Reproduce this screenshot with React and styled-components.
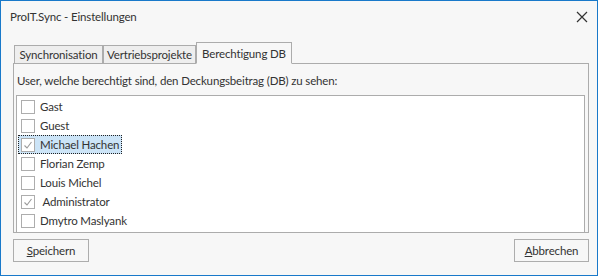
import React from "react";
import styled, { createGlobalStyle } from "styled-components";

const Global = createGlobalStyle`
  html, body { margin: 0; padding: 0; background: #f7f7f7; }
  body { font-family: Lato, "Noto Sans", sans-serif; }
`;

const Window = styled.div`
  box-sizing: border-box;
  width: 598px;
  height: 276px;
  border: 1px solid #1979ca;
  background: #f7f7f7;
  color: #333;
  font-size: 11.5px;
  letter-spacing: -0.15px;
  display: flex;
  flex-direction: column;
  overflow: hidden;
`;

const TitleBar = styled.div`
  height: 31px;
  display: flex;
  align-items: center;
  justify-content: space-between;
  padding: 0 9px 0 9px;
  flex-shrink: 0;
`;

const Title = styled.span`
  color: #333;
`;

const Close = styled.svg`
  width: 12px;
  height: 12px;
`;

const Body = styled.div`
  display: flex;
  flex-direction: column;
  padding: 11px 8px 0 12px;
`;

const TabStrip = styled.div`
  display: flex;
  align-items: flex-end;
  height: 21px;
  padding-left: 1px;
  position: relative;
  z-index: 1;
  margin-bottom: -1px;
`;

const Tab = styled.div`
  box-sizing: border-box;
  width: ${(p) => p.$w}px;
  height: ${(p) => (p.$active ? "22px" : "19px")};
  border: 1px solid #acacac;
  border-bottom: ${(p) => (p.$active ? "1px solid #f7f7f7" : "1px solid #acacac")};
  background: ${(p) => (p.$active ? "#f7f7f7" : "#eeeeee")};
  display: flex;
  align-items: center;
  justify-content: center;
  color: #333;
  white-space: nowrap;
`;

const Panel = styled.div`
  box-sizing: border-box;
  height: 170px;
  border: 1px solid #acacac;
  padding: 0 3px 0 2px;
  display: flex;
  flex-direction: column;
`;

const Label = styled.div`
  height: 31px;
  display: flex;
  align-items: center;
  padding-left: 1px;
  padding-top: 2px;
  box-sizing: border-box;
`;

const List = styled.div`
  flex: 1;
  background: #fff;
  border: 1px solid #acacac;
  border-bottom: none;
  overflow: hidden;
  padding: 1px 0 0 1px;
`;

const Row = styled.div`
  height: 19px;
  display: flex;
  align-items: center;
  flex-shrink: 0;
`;

const Item = styled.div`
  box-sizing: border-box;
  height: 19px;
  display: inline-flex;
  align-items: center;
  padding: 0 3px 0 3px;
  background: ${(p) => (p.$selected ? "#cce4f7" : "transparent")};
  outline: ${(p) => (p.$selected ? "1px dotted #222" : "none")};
  outline-offset: -1px;
`;

const Box = styled.span`
  box-sizing: border-box;
  width: 14px;
  height: 14px;
  border: 1px solid #adadad;
  background: #fff;
  display: inline-flex;
  align-items: center;
  justify-content: center;
  margin-right: 5px;
  flex-shrink: 0;
`;

const Name = styled.span`
  color: #333;
  white-space: pre;
`;

const Footer = styled.div`
  display: flex;
  justify-content: space-between;
  padding-top: 6px;
`;

const Button = styled.button`
  box-sizing: border-box;
  width: ${(p) => p.$w}px;
  height: 23px;
  border: 1px solid #adadad;
  background: #f7f7f7;
  font-family: inherit;
  font-size: inherit;
  letter-spacing: inherit;
  color: #333;
  padding: 0;
  display: flex;
  align-items: center;
  justify-content: center;
`;

const Caption = styled.span`
  display: inline-block;
  white-space: pre;
  &::first-letter {
    text-decoration: underline;
  }
`;

const Check = () => (
  <svg width="10" height="10" viewBox="0 0 10 10">
    <path d="M1.5 5.5 L4 8 L8.5 2" fill="none" stroke="#9a9a9a" strokeWidth="1.1" />
  </svg>
);

const users = [
  { name: "Gast" },
  { name: "Guest" },
  { name: "Michael Hachen", checked: true, selected: true },
  { name: "Florian Zemp" },
  { name: "Louis Michel" },
  { name: " Administrator", checked: true },
  { name: "Dmytro Maslyank" },
  { name: "" },
];

export default function App() {
  return (
    <>
      <Global />
      <Window>
        <TitleBar>
          <Title>ProIT.Sync - Einstellungen</Title>
          <Close viewBox="0 0 12 12">
            <path d="M1 1 L11 11 M11 1 L1 11" stroke="#333" strokeWidth="1.2" />
          </Close>
        </TitleBar>
        <Body>
          <TabStrip>
            <Tab $w={89}>Synchronisation</Tab>
            <Tab $w={93}>Vertriebsprojekte</Tab>
            <Tab $active $w={96}>Berechtigung DB</Tab>
          </TabStrip>
          <Panel>
            <Label>User, welche berechtigt sind, den Deckungsbeitrag (DB) zu sehen:</Label>
            <List>
              {users.map((u, i) => (
                <Row key={i}>
                  <Item $selected={u.selected}>
                    <Box>{u.checked && <Check />}</Box>
                    {u.name && <Name>{u.name}</Name>}
                  </Item>
                </Row>
              ))}
            </List>
          </Panel>
          <Footer>
            <Button $w={76}>
              <Caption>Speichern</Caption>
            </Button>
            <Button $w={75}>
              <Caption>Abbrechen</Caption>
            </Button>
          </Footer>
        </Body>
      </Window>
    </>
  );
}
